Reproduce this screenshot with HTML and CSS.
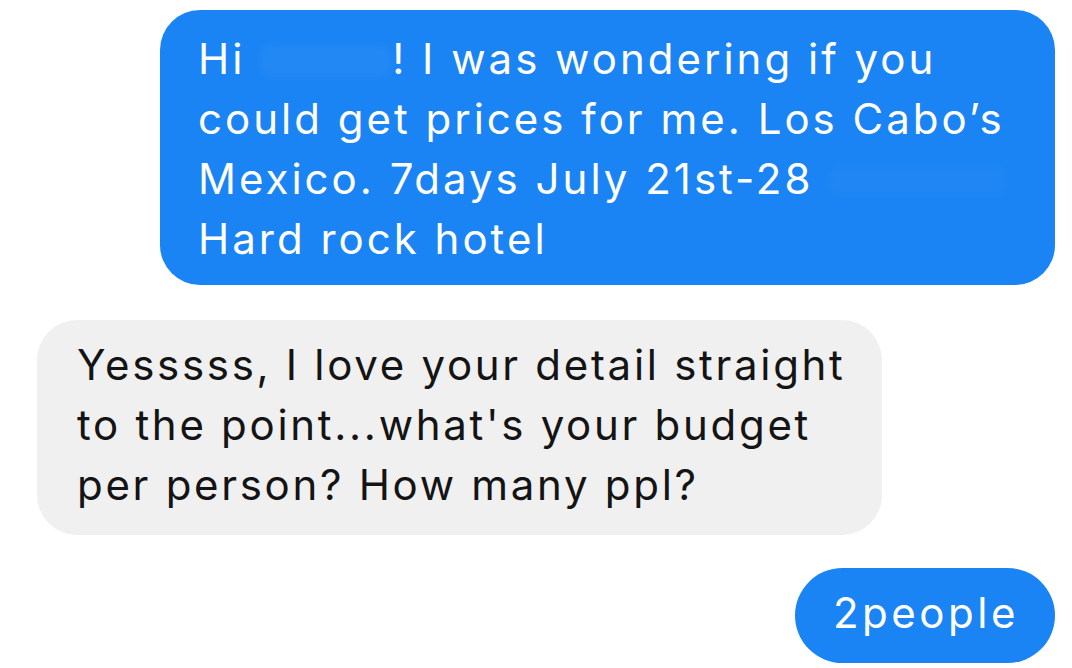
FILE: index.html
```html
<!DOCTYPE html>
<html lang="en">
  <head>
    <meta charset="UTF-8" />
    <meta name="viewport" content="width=device-width, initial-scale=1.0" />
    <title>Messages</title>
    <link rel="stylesheet" href="styles.css">
  </head>
  <body>
    <div class="thread">
      <div class="bubble sent first">
        Hi <span class="smudge name"></span>! I was wondering if you<br />
        could get prices for me. Los Cabo’s<br />
        Mexico. 7days July 21st-28 <span class="smudge tail"></span><br />
        Hard rock hotel
      </div>

      <div class="bubble received">
        Yesssss, I love your detail straight<br />
        to the point...what's your budget<br />
        per person? How many ppl?
      </div>

      <div class="bubble sent short">2people</div>
    </div>
  </body>
</html>
```

FILE: styles.css
```css
body {
  margin: 0;
  background: #ffffff;
  font-family: Inter, "Liberation Sans", sans-serif;
}

.thread {
  display: flex;
  flex-direction: column;
  padding: 10px 17px 0 37px;
}

.bubble {
  box-sizing: border-box;
  font-size: 42px;
  line-height: 60px;
  letter-spacing: 3px;
  white-space: nowrap;
}

.sent {
  align-self: flex-end;
  background: #1a84f4;
  color: #ffffff;
}

.received {
  align-self: flex-start;
  background: #f0f0f0;
  color: #141414;
  letter-spacing: 2.7px;
}

.first {
  width: 895px;
  height: 275px;
  padding: 19px 20px 0 38px;
  border-radius: 40px;
}

.received {
  width: 845px;
  height: 215px;
  margin-top: 35px;
  padding: 15px 20px 0 40px;
  border-radius: 40px;
}

.short {
  margin-top: 33px;
  width: 260px;
  height: 95px;
  padding: 15px 0 0 38px;
  border-radius: 48px;
  letter-spacing: 3.5px;
}

.smudge {
  display: inline-block;
  height: 34px;
  vertical-align: -4px;
  border-radius: 12px;
  background: rgba(255, 255, 255, 0.04);
  filter: blur(5px);
}

.name {
  width: 132px;
}

.tail {
  width: 180px;
  background: rgba(255, 255, 255, 0.025);
}
```
